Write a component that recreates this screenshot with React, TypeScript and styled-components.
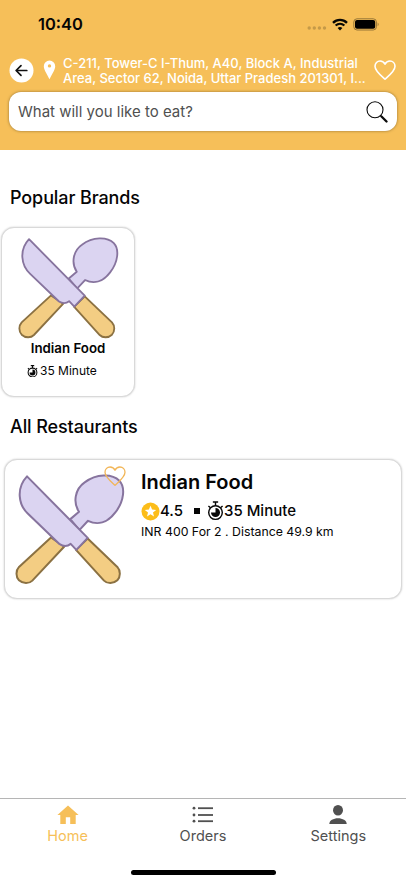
import React from "react";
import styled, { createGlobalStyle } from "styled-components";

const GlobalStyle = createGlobalStyle`
  * { box-sizing: border-box; }
  body { margin: 0; background: #fff; }
  svg { display: block; flex: none; }
`;

const Screen = styled.div`
  width: 406px;
  height: 883px;
  display: flex;
  flex-direction: column;
  overflow: hidden;
  background: #fff;
  color: #050505;
  font-family: Inter, "Liberation Sans", sans-serif;
`;

const Header = styled.header`
  height: 150px;
  flex: none;
  background: #f6bf59;
`;

const StatusBar = styled.div`
  height: 48px;
  display: flex;
  align-items: center;
  justify-content: space-between;
  padding: 0 26px 0 38px;
`;

const Text = styled.span<{ $size: number; $line: number; $weight?: number; $spacing?: number; $color?: string }>`
  display: block;
  white-space: nowrap;
  font-size: ${(p) => p.$size}px;
  line-height: ${(p) => p.$line}px;
  font-weight: ${(p) => p.$weight ?? 500};
  letter-spacing: ${(p) => p.$spacing ?? 0}px;
  color: ${(p) => p.$color ?? "#050505"};
`;

const StatusIcons = styled.div`
  display: flex;
  align-items: center;
  gap: 5px;
`;

const AddressRow = styled.div`
  height: 44px;
  display: flex;
  align-items: center;
  padding: 0 10px 0 9px;
`;

const Address = styled.div`
  flex: 1;
  margin: 1px 0 0 7px;
`;

const SearchBox = styled.div`
  height: 39px;
  margin: 0 9px 0 9px;
  padding: 0 9px 0 9px;
  display: flex;
  align-items: center;
  justify-content: space-between;
  border-radius: 12px;
  background: #fff;
  box-shadow: 0 0 3px rgba(80, 60, 20, 0.6);
`;

const Content = styled.main`
  flex: 1;
  display: flex;
  flex-direction: column;
`;

const Section = styled.section<{ $top: number }>`
  padding-top: ${(p) => p.$top}px;
`;

const Heading = styled.h2`
  margin: 0 0 0 10px;
  font-size: 18px;
  line-height: 24px;
  font-weight: 500;
  letter-spacing: -0.1px;
`;

const Card = styled.article`
  border: 1px solid #d9d9d9;
  border-radius: 13px;
  background: #fff;
  box-shadow: 0 0 2px rgba(0, 0, 0, 0.22);
`;

const BrandCard = styled(Card)`
  width: 134px;
  height: 170px;
  margin: 17px 0 0 1px;
  padding-top: 9px;
  display: flex;
  flex-direction: column;
  align-items: center;
`;

const BrandTime = styled.div`
  display: flex;
  align-items: center;
  align-self: flex-start;
  gap: 2px;
  margin: 6px 0 0 25px;
`;

const RestaurantCard = styled(Card)`
  position: relative;
  height: 140px;
  margin: 20px 4px 0 4px;
  padding: 14px 0 0 10px;
  display: flex;
`;

const Favourite = styled.div`
  position: absolute;
  left: 99px;
  top: 6px;
`;

const Details = styled.div`
  margin: -5px 0 0 16px;
`;

const Facts = styled.div`
  display: flex;
  align-items: center;
  height: 24px;
  margin-top: 4px;
`;

const Bullet = styled.i`
  width: 6px;
  height: 6px;
  margin: 0 7px 0 11px;
  background: #050505;
`;

const TabBar = styled.nav`
  height: 72px;
  flex: none;
  display: grid;
  grid-template-columns: repeat(3, 1fr);
  border-top: 1px solid #b5b5b5;
`;

const Tab = styled.div`
  display: flex;
  flex-direction: column;
  align-items: center;
  padding-top: 5px;
`;

const HomeArea = styled.div`
  height: 13px;
  flex: none;
`;

const HomeIndicator = styled.div`
  width: 145px;
  height: 5px;
  margin: 0 auto;
  border-radius: 3px;
  background: #000;
`;

const SignalDots = () => (
  <svg width="20" height="14" viewBox="0 0 20 14" fill="#c59a48">
    {[2.2, 7.3, 12.4, 17.5].map((x) => (
      <circle key={x} cx={x} cy="11" r="1.7" />
    ))}
  </svg>
);

const Wifi = () => (
  <svg width="16" height="13" viewBox="0 0 16 13" fill="none" stroke="#080704">
    <path d="M1 4.8C5 .9 11 .9 15 4.8" strokeWidth="2.4" />
    <path d="M3.6 7.5C6.2 5.2 9.8 5.2 12.4 7.5" strokeWidth="2.1" />
    <path d="M8 12.5 5.6 9.9Q8 8 10.4 9.9Z" fill="#080704" stroke="none" />
  </svg>
);

const Battery = () => (
  <svg width="27" height="13" viewBox="0 0 27 13">
    <rect x=".8" y=".8" width="22.6" height="11.2" rx="3.2" fill="none" stroke="#967537" />
    <rect x="2" y="2" width="20.2" height="8.8" rx="2" fill="#000" />
    <path d="M24.7 4.6Q26.6 6.4 24.7 8.2Z" fill="#967537" />
  </svg>
);

const BackButton = () => (
  <svg width="25" height="25" viewBox="0 0 25 25">
    <circle cx="12.5" cy="12.5" r="12" fill="#fff" />
    <path d="M17.8 12.5H7.5M12 7.6 7.1 12.5 12 17.4" fill="none" stroke="#111" strokeWidth="1.7" strokeLinecap="round" strokeLinejoin="round" />
  </svg>
);

const Pin = styled(({ className }: { className?: string }) => (
  <svg className={className} width="13" height="20" viewBox="0 0 13 20">
    <path fillRule="evenodd" fill="#fff" d="M6.5.5A5.7 5.7 0 0 0 .8 6.2C.8 10 4.6 15 6.5 19.2 8.4 15 12.2 10 12.2 6.2A5.7 5.7 0 0 0 6.5.5ZM6.5 4.2A1.7 1.7 0 1 1 6.5 7.6 1.7 1.7 0 0 1 6.5 4.2Z" />
  </svg>
))`
  margin-left: 9px;
`;

const Heart = ({ width, color, stroke }: { width: number; color: string; stroke: number }) => (
  <svg width={width} height={width * 0.92} viewBox="0 0 22 20.2" fill="none" stroke={color} strokeWidth={stroke} strokeLinejoin="round">
    <path d="M11 19.2C8 16.4 1 11.3 1 6.3 1 3.1 3.3 1 6.1 1 8.4 1 10.1 2.3 11 4.2 11.9 2.3 13.6 1 15.9 1 18.7 1 21 3.1 21 6.3 21 11.3 14 16.4 11 19.2Z" />
  </svg>
);

const Search = () => (
  <svg width="22" height="22" viewBox="0 0 22 22" fill="none" stroke="#0a0a0a">
    <circle cx="9" cy="8.8" r="8" strokeWidth="1.1" />
    <path d="M14.6 14.6 16 16" strokeWidth="1.2" />
    <path d="M15.5 15.5 20.5 20.5" strokeWidth="2.3" strokeLinecap="round" />
  </svg>
);

const Cutlery = ({ width, height }: { width: number; height: number }) => (
  <svg width={width} height={height} viewBox="44 70 330 332" preserveAspectRatio="none" strokeWidth="6" strokeLinejoin="round">
    <g fill="#f3cd83" stroke="#8b7142">
      <path d="M152 260 56 348C46 359 46 377 56 388 68 399 86 399 96 389L192 287Z" />
      <path d="M262 263 351 348C361 359 361 377 351 388 339 399 321 399 311 389L227 297Z" />
    </g>
    <g fill="#dbd4f1" stroke="#87749e">
      <path d="M210 205 236 183C217 155 224 115 253 95 288 69 335 68 357 90 376 110 371 152 345 185 321 217 291 224 263 210L237 238Z" />
      <path d="M80 77 262 261 228 297 211 279C201 287 188 286 178 280L83 189C54 162 47 112 80 77Z" />
    </g>
  </svg>
);

const Stopwatch = ({ size, stroke }: { size: number; stroke: number }) => (
  <svg width={size} height={size * 1.15} viewBox="0 0 18 20.7" fill="none" stroke="#080808" strokeWidth={stroke}>
    <circle cx="9" cy="12.3" r="7.2" />
    <path d="M6.2 1H11.8M9 1V5M1.5 5.3 3.7 7.2M16.5 5.3 14.3 7.2" />
    <path d="M9 7.4V12.3H4.2A4.8 4.8 0 1 0 9 7.4Z" fill="#080808" stroke="none" />
  </svg>
);

const Star = () => (
  <svg width="19" height="19" viewBox="0 0 19 19">
    <circle cx="9.5" cy="9.5" r="9" fill="#fcbd19" />
    <path d="M9.5 3.7 11.1 7.6 15.2 7.9 12 10.5 13 14.5 9.5 12.3 6 14.5 7 10.5 3.8 7.9 7.9 7.6Z" fill="#fff" />
  </svg>
);

const HomeIcon = () => (
  <svg width="22" height="22" viewBox="0 0 22 22" fill="#f6bf59">
    <path d="M11 1.4 21.6 11.1H18.7V20.1H13.2V13.2H8.8V20.1H3.3V11.1H.4Z" />
  </svg>
);

const ListIcon = () => (
  <svg width="22" height="22" viewBox="0 0 22 22" fill="#505050">
    {[4.2, 11, 17.2].map((y) => (
      <g key={y}>
        <circle cx="2" cy={y} r="1.4" />
        <rect x="6" y={y - 0.9} width="15" height="1.8" />
      </g>
    ))}
  </svg>
);

const PersonIcon = () => (
  <svg width="22" height="22" viewBox="0 0 22 22" fill="#505050">
    <ellipse cx="11" cy="6.3" rx="5" ry="5.3" />
    <path d="M2.3 20C2.3 16.5 6.5 14.3 11 14.3S19.7 16.5 19.7 20Z" />
  </svg>
);

const tabs = [
  { label: "Home", icon: <HomeIcon />, color: "#f6bf59" },
  { label: "Orders", icon: <ListIcon />, color: "#505050" },
  { label: "Settings", icon: <PersonIcon />, color: "#505050" },
];

export default function App() {
  return (
    <Screen>
      <GlobalStyle />
      <Header>
        <StatusBar>
          <Text $size={16.5} $line={22} $weight={600}>10:40</Text>
          <StatusIcons>
            <SignalDots />
            <Wifi />
            <Battery />
          </StatusIcons>
        </StatusBar>
        <AddressRow>
          <BackButton />
          <Pin />
          <Address>
            <Text $size={13} $line={15} $color="#fff">C-211, Tower-C I-Thum, A40, Block A, Industrial</Text>
            <Text $size={13} $line={15} $color="#fff">Area, Sector 62, Noida, Uttar Pradesh 201301, I...</Text>
          </Address>
          <Heart width={22} color="#fff" stroke={1.6} />
        </AddressRow>
        <SearchBox>
          <Text $size={15} $line={20} $weight={400} $color="#505050">What will you like to eat?</Text>
          <Search />
        </SearchBox>
      </Header>
      <Content>
        <Section $top={36}>
          <Heading>Popular Brands</Heading>
          <BrandCard>
            <Cutlery width={101} height={102} />
            <Text $size={13.3} $line={18} $weight={600}>Indian Food</Text>
            <BrandTime>
              <Stopwatch size={11} stroke={1.7} />
              <Text $size={12} $line={16} $weight={400}>35 Minute</Text>
            </BrandTime>
          </BrandCard>
        </Section>
        <Section $top={18}>
          <Heading>All Restaurants</Heading>
          <RestaurantCard>
            <Cutlery width={110} height={111} />
            <Favourite>
              <Heart width={22} color="#f2b658" stroke={1.3} />
            </Favourite>
            <Details>
              <Text $size={20} $line={26} $weight={600}>Indian Food</Text>
              <Facts>
                <Star />
                <Text $size={15} $line={20}>4.5</Text>
                <Bullet />
                <Stopwatch size={17} stroke={1.5} />
                <Text $size={15} $line={20}>35 Minute</Text>
              </Facts>
              <Text $size={12.3} $line={18} $weight={400}>INR 400 For 2 . Distance 49.9 km</Text>
            </Details>
          </RestaurantCard>
        </Section>
      </Content>
      <TabBar>
        {tabs.map((tab) => (
          <Tab key={tab.label}>
            {tab.icon}
            <Text $size={14.5} $line={20} $weight={400} $color={tab.color}>{tab.label}</Text>
          </Tab>
        ))}
      </TabBar>
      <HomeArea>
        <HomeIndicator />
      </HomeArea>
    </Screen>
  );
}
